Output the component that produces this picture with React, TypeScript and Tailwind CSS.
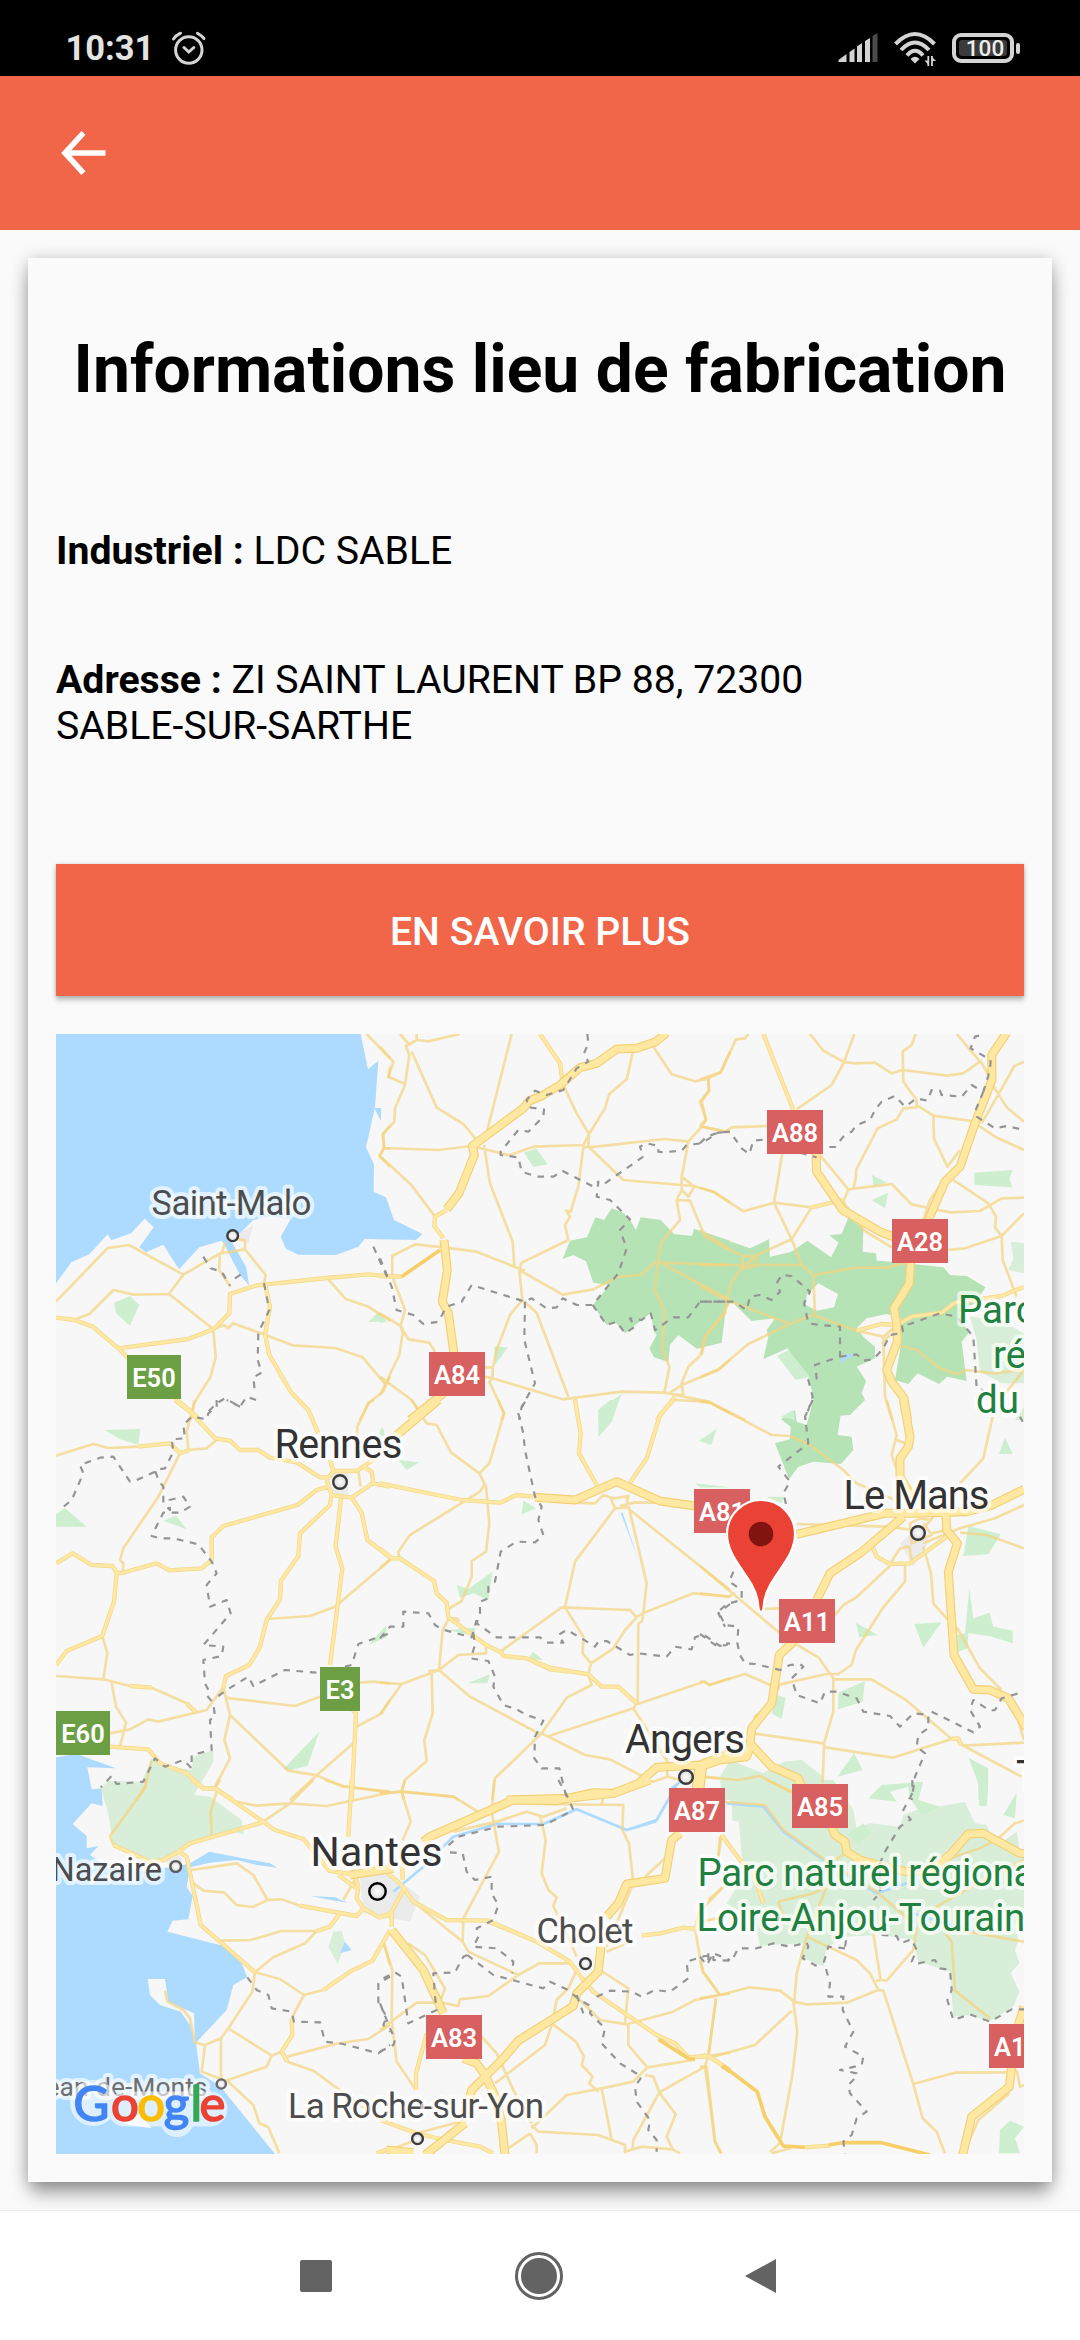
import React from 'react';

type Tile = {
  x: number;
  y: number;
  water?: string;
  river?: string;
  land?: string;
  forest?: string;
  clearing?: string;
  park?: string;
  wood?: string;
  urban?: string;
  pond?: string;
  minor: string;
  medium?: string;
  highway?: string;
  trunk?: string;
  border?: string;
};

// Each tile's polylines are in thirds of a pixel, measured from the tile's corner.
const tiles: Tile[] = [
  {
    x: 40,
    y: 1020,
    water:
      '48,42 962,42 984,148 1015,122 1005,262 978,382 1002,434 1001,515 1038,532 1062,600 1148,642 1128,660 974,657 955,680 888,705 775,704 738,686 722,650 752,598 690,590 640,600 600,640 575,665 618,740 628,797 600,765 550,668 545,662 478,682 417,748 370,674 318,697 298,682 341,622 314,596 273,640 214,661 203,643 148,703 95,726 48,790;1003,264 1024,264 1022,303',
    urban: '600,640 640,615 625,670 600,662',
    wood: '222,848 270,828 298,855 270,917 228,880;1015,875 985,905 1040,905',
    minor:
      '48,845 203,684 267,675 430,764 540,700 615,688 615,662 585,655;430,764 387,822 282,824 220,810 148,882 100,900;387,822 520,928 527,1012 512,1070 462,1150 452,1200;545,700 555,668;540,700 537,750 572,800;615,688 677,765 672,790;520,928 552,915 565,925 578,910 675,944 758,976 886,984 968,1012 1038,1095 1050,1070;1038,1095 1030,1115 985,1150 960,1200;865,778 916,836 985,860 1050,902;980,42 1050,115;1046,175 1050,140;1050,318 1030,342 1032,384 1018,408 1050,440;1032,384 1050,385;520,928 552,900',
    medium:
      '48,893 105,900 158,920 235,985 445,957 520,928 568,880 570,822 650,796 860,774 985,763 1050,770;235,985 262,1012 400,1130 460,1180 480,1200;675,790 690,860 675,944 688,1005 752,1115 805,1170 818,1200',
    border:
      '490,710 512,745 545,755 570,797;585,775 605,762;672,790 688,870 655,938 653,1020 665,1058 640,1072 645,1118;648,1140 620,1130 600,1160 555,1135 530,1150 505,1175;1000,680 1050,790',
  },
  {
    x: 380,
    y: 1020,
    forest:
      '548,717 570,662 621,652 646,592 672,600 695,565 730,578 750,600 768,630 782,592 842,600 882,642 936,648 942,626 1050,662 1050,850 1035,870 1020,968 950,986 895,945 870,975 865,1026 822,1012 808,985 830,945 822,935 812,880 735,940 705,905 680,915 638,855 690,795 640,788 618,724 580,705',
    wood:
      '432,398 468,385 503,433 460,441;343,980 384,982 345,1035;655,1170 725,1122 700,1180 690,1200 655,1200;0,880 18,905 0,908',
    minor:
      '60,42 85,70;110,42 110,60 145,64 240,42;110,60 78,78 88,105 75,195 45,265 43,305 8,342 12,384 175,390 275,378 388,406 460,380 610,375 627,342;0,80 40,126 25,170 75,192;95,95 170,263 250,312 290,360;12,384 0,408 95,496 165,590;395,42 322,330;548,190 590,280 627,342 625,380 610,382 595,500 572,575 558,572 570,590 555,615 565,660 425,728 418,750 427,840;820,80 875,163 945,184 985,175 1022,157 1050,95;985,175 987,212 960,245 978,300 965,320 925,365 855,357 627,382;965,320 1050,338;760,90 740,178 688,222 675,265 627,342;312,375 330,490 398,665 403,740;627,382 730,480 940,498 1000,515 1050,548;925,365 905,470 943,500 925,530 905,510 905,470;905,510 890,540 900,600 845,665 833,728 825,812 853,870 848,990 868,1042 853,1118;890,540 930,542 975,650 1050,692;190,682 290,695 403,740 435,752;418,750 548,824 640,808 715,770 783,765 825,727 1050,735;845,730 1050,840 1030,880 975,950 962,1005 925,1040 905,1090 910,1125 870,1122;427,840 390,885 350,990 338,1045 338,1075 328,1085 372,1180 365,1200;427,840 470,878 565,1130;315,1042 338,1042;315,1070 338,1075 548,1138 725,1115 853,1118 985,1145 1050,1180;585,1135 597,1200;870,1118 905,1095 1015,1050 1050,1020;190,682 105,673 37,708 37,770 75,870 62,918 85,958 148,968 165,996;0,880 62,918 68,940 58,1005 0,1125;0,1070 95,1140 115,1170',
    medium: '0,768 65,770;480,42 540,130 548,190;200,570 165,590 163,618 190,655;885,1130 830,1200',
    trunk: '65,770 180,690',
    highway:
      '860,38 828,65 770,85 710,87 650,130 600,143 540,195 490,225 447,243 430,265 277,378 283,405 237,520 200,568;192,660 202,750 187,845 205,880 222,1000;190,1120 90,1200',
    border:
      '622,42 625,70 612,100 625,125 590,145 550,210 500,225 465,212 440,240 445,262 492,268 490,290 445,335 415,330 362,395 362,405 415,412 425,455 470,470 520,470 548,453 640,500 655,485 650,530 690,540 750,598 720,630 740,685 715,760 638,855 590,855 548,835 530,862 500,865 455,835 435,845 275,795 245,845 200,860 175,905 130,912 100,885 50,870 35,800 0,715;675,490 715,462 790,410 780,380 800,370 835,378 835,395 850,397 905,392 920,375 965,370 1015,338 1050,335;638,855 680,915 710,905 735,940 765,920 750,895 785,900 812,880 825,930 880,892 925,892 960,845 1040,845;435,845 433,960 465,1090 425,1160 418,1200',
  },
  {
    x: 700,
    y: 1020,
    forest:
      '0,632 150,685 207,658 210,710 273,696 322,662 393,712 416,668 388,646 425,642 445,593 490,625 488,695 528,700 530,722 575,725 730,742 750,765 800,768 857,802 825,850 780,880 805,940 785,965 800,1083 742,1070 717,1092 653,1060 625,1092 585,1080 605,960 600,890 560,882 500,895 470,925 490,950 525,980 525,1015 470,1040 498,1082 485,1120 495,1138 445,1185 420,1187 410,1230 340,1230 335,1200 340,1130 325,1070 262,985 190,1018 205,950 200,930 225,895 155,903 100,850 80,850 65,968 0,983',
    clearing: '355,790 414,822 402,862 350,872 318,855 320,825',
    park: '932,665 972,670 972,760 925,750 940,715;810,890 900,900 972,940 972,1090 905,1090 840,1055 830,960;945,1200 972,1160 972,1200',
    wood: '232,1008 265,990 330,1070 287,1080;517,465 560,488 520,498;515,540 564,518 556,565;823,458 938,450 928,475 937,502 823,495;243,1190 280,1170 285,1200',
    pond: '415,1030 470,1003 435,1003',
    minor:
      '145,42 135,55 108,58 62,157 0,178;330,42 370,92 432,126 465,130 525,128 575,160 608,150 742,167 790,160 840,125 770,42;463,42 432,126 395,195 290,268;647,42 635,75 608,95 610,185 650,240 650,262 610,265 590,298 533,325 468,450 468,470 460,508;650,255 700,287 815,303 885,350 972,390;700,287 702,355 742,440 780,390;972,125 943,138 900,215 845,310;875,190 920,262 972,305;840,120 865,165;0,318 75,335 95,322 200,318;25,175 27,212 5,245 18,298 0,318;0,503 40,515 130,574 222,548 335,562 275,658 160,710 130,708 100,695 0,630;247,400 222,548 275,658 305,735;360,405 445,508 575,492 635,553 750,577 840,573 905,535 972,533;445,508 430,545 490,630 575,682;745,690 795,685 905,648 972,580;760,480 865,550 888,590 885,622 905,648 908,720 950,830;670,600 690,540 725,490;0,735 305,735 340,765 470,743 560,743 632,725;130,708 170,708 165,738 122,748 130,708;122,748 165,710;122,748 95,785 80,840 75,880 15,950 5,1005;0,798 80,840 270,912 340,885 470,932;270,912 145,972 55,1048 0,1072;340,765 345,885;550,950 555,1130 577,1200;605,978 650,990 720,1045 770,1062 800,1050 880,1060 972,1050;972,1050 900,1140;545,970 570,945;0,1143 30,1148 135,1200;470,932 550,950 585,920',
    medium: '190,42 280,270;470,932 545,912 590,915 635,890 725,878 765,848 905,828 972,800;335,562 428,540',
    highway:
      '920,38 875,105 876,180 825,310 780,440 735,485 685,600;632,725 628,790 582,865 590,910 592,965 560,1050 575,1085 612,1135 623,1200;348,400 350,455 428,570 540,635 580,650',
    border:
      '0,370 20,350 55,338 90,335 125,385 148,402 160,362 200,358;388,381 405,381 430,350 455,335 470,315 510,300 525,270 545,245 585,228 615,260 650,235 682,242 695,210 720,212 725,225 785,230 815,195 850,215 870,150 872,120 812,85 825,50 855,42;850,215 825,275 830,290 885,325 920,318 972,330;0,845 100,845 140,870 150,830 180,825 215,840 240,815 230,790 245,765 275,768 330,815 312,850 325,910 370,916 420,920 420,1010 345,1035 350,1075 325,1080 338,1130 315,1200;420,1010 470,1003 490,1022 520,1018 550,985 570,945 610,938 605,915 630,912 720,880 770,890 820,950 830,1105 850,1110;300,398 350,412',
  },
  {
    x: 40,
    y: 1400,
    urban: '875,210 925,210 925,285 880,285',
    wood: '195,90 301,87 295,134 240,118;48,343 75,325 140,380 48,380;370,362 408,347 440,388;985,735 1038,677 1040,712;730,1107 838,995 803,1097 745,1112;1015,105 1028,80 1035,108',
    minor:
      '48,167 160,132 205,144 295,140;465,0 455,40 440,95 445,150 500,145 530,120;420,160 355,290 250,445 240,480 250,490 248,519;680,657 810,648 885,620 1050,480;48,828 190,838 270,858 335,863 440,910 468,937;187,708 202,760 190,838;215,848 228,920 258,968 240,1040;210,1000 270,988 325,958 355,965 500,930 550,862;550,862 570,945 553,1020 570,1075 525,1160;555,893 765,918 840,890;570,945 745,1112 830,1126 910,1160 1050,1175;950,980 1025,940 1050,900;960,848 1000,845 1050,850;940,1030 830,1126 750,1200;1000,0 985,10 952,80 950,130;955,213 962,260;335,1080 315,1160 290,1200',
    medium:
      '405,0 455,40 525,115 570,122 600,150 655,150 690,173 770,187 840,232 865,232;860,240 875,285 935,293 1000,248 995,215 970,200 950,213 880,213 860,240;880,213 870,180;775,0 805,30 835,100;1000,250 1050,260;970,200 1010,170;865,260 830,270 773,315 550,378 515,412 515,480 485,505 388,511 350,490 245,519 230,519 218,498 155,495 98,460 48,490;230,519 222,605 187,708 80,753 48,795;873,290 870,315 780,400 775,468 723,542 720,598 680,660 660,740 628,795 558,828 550,865;903,295 887,440 907,505 870,795;935,293 965,338 982,420 1050,472;210,1040 325,1048 360,1090 440,1120 490,1165 525,1165 580,1200;935,925 948,940 935,1200;295,140 390,130 420,160 448,150;270,858 335,863;440,910 468,937',
    border:
      '530,0 530,20 505,40 500,58 455,50 430,75 435,115 395,118 400,155 375,205 345,210 355,240 370,260 370,310 390,330 388,300 430,290 450,320 420,338 370,338 335,408 360,415 400,415 475,433 515,485 530,520 500,555 510,620 560,600 572,640 490,735 550,740 545,768 490,780 495,850 505,870 500,885 520,910 525,950 510,960 515,1050 455,1065 455,1105 430,1080 375,1100 345,1075 310,1145 230,1152 215,1128 182,1162;345,215 290,240 270,245 220,170 180,173 120,195 130,220 95,300 65,325;535,888 560,870 625,830 640,858 735,810 830,818;915,800 935,795 955,732 1050,700;600,20 560,0',
  },
  {
    x: 380,
    y: 1400,
    park: '1020,1140 1050,1120 1050,1170 1025,1170',
    wood: '430,302 468,325 425,343;55,180 118,187 80,210;230,555 265,567 337,515 325,600 280,580 240,593;205,690 285,683 285,708;458,755 490,780 445,778;262,850 330,823 322,850;655,30 690,0 718,0 695,65 655,112;957,122 1010,87 992,135;945,250 1050,262 960,262;0,90 8,82 12,110 0,110',
    pond: '722,338 728,338 774,478',
    river: '875,1165 915,1135',
    minor:
      '95,0 140,70 170,75 213,157 298,220 318,260 328,370 318,455 275,483 275,530 245,603 203,628;355,0 372,40 328,190 298,220;312,255 300,275 90,405 55,455 58,475;0,505 35,475;207,655 188,690 177,810 235,765 318,760 318,738;207,655 230,655 238,665;145,813 177,810 65,852 0,848;65,852 0,942;155,812 158,940 133,1020 140,1083 75,1140 65,1175 0,1180;65,1175 220,1190 235,1200;177,810 270,890 485,1005;485,1000 345,1135 337,1200;65,1175 72,1200;365,752 545,622 750,630 770,652 735,690 700,745 633,790 625,823 635,855 560,893 485,1000 615,1065 690,1078 790,1130;555,622 610,710 608,760 633,790;555,622 585,485 705,325;705,325 738,322 745,288 700,295 670,285 645,310 580,308;705,325 690,290;738,285 800,550 788,655 785,665 775,670 773,912 972,845 988,855 1050,835;770,650 800,635 940,580 1050,590;740,322 1050,570;720,318 765,307 840,308;500,1010 760,925 865,1090;770,910 760,925;860,1075 862,1130 820,1145 790,1140;862,1130 900,1140;880,0 985,5 1050,38;970,1130 1020,1135',
    medium:
      '0,250 245,300 360,308 410,285 460,290;0,445 35,475 60,475 162,543 170,580 200,608 205,652 315,733 365,758 370,768 440,775 510,803 625,823 665,860 715,860 770,910;440,775 510,808 570,815;585,0 602,100 597,160 650,255;880,0 840,45 800,175 750,248',
    highway:
      '175,0 45,110;465,292 585,300 710,245 840,303 945,318;380,1200 560,1195 700,1180 775,1150 830,1102 960,1095 1050,1060;958,1095 948,1165',
    border:
      '435,5 415,40 430,100 435,150 465,290 485,320 475,360 490,405 465,427 410,425 362,455 345,545 325,560 325,595 300,605 300,640 290,670 350,712 480,712 500,728 550,728 535,705 560,690 605,715 645,740 655,725 680,723 750,765 775,760 860,770 885,740 935,748 945,712 970,703 1020,738 1050,730;0,715 30,680 70,680 70,635 145,640 165,675 185,688 275,712 290,660;280,700 285,735 272,775 325,783 345,830 340,860 370,915 410,928 440,945 490,962 465,1010 463,1075 485,1105 538,1105 560,1195;1050,612 1015,640 1035,680',
  },
  {
    x: 700,
    y: 1400,
    forest:
      '340,0 495,0 450,45 422,45 413,105 455,110 460,150 423,192 340,185 295,200 267,238 225,130 270,118 272,80 243,58 285,30 290,65 320,75',
    park: '60,1130 90,1080 190,1120 250,1085 305,1080 370,1130 370,1200 75,1200',
    wood: '5,122 48,87 35,133;915,112 938,162 897,162;805,378 902,403 865,463 790,468;808,565 820,655 868,638 880,680 938,692 938,730 868,708 805,700 803,745 775,755 770,705 795,700;643,672 725,667 670,743;468,668 533,705 478,712;415,878 495,843 488,905 415,928;230,885 257,893 245,957 215,940;462,1060 488,1110 412,1130;805,1073 865,1105 862,1200 835,1200 835,1150;200,290 250,290 245,310;0,252 75,262 0,262',
    urban: '600,430 640,395 690,420 640,500',
    minor:
      '0,5 30,8 215,105 270,108 330,135 430,210 470,250 580,298;560,0 590,105 575,165 595,220;590,120 615,130;878,50 850,175 780,250;972,315 885,355 780,385 670,430;780,398 860,405 972,445;290,372 560,380 640,390;690,360 660,355 630,370 635,430 695,405 670,370;700,350 670,385;570,492 600,445 628,440 635,480;670,440 693,520 700,610 740,655 775,690 840,805 905,870;615,490 615,545 550,622 468,750 455,795 410,825;570,497 468,593 430,615 400,650;0,498 240,700;280,728 355,772 400,835 400,935 372,1030 368,1150;400,838 515,838 615,898 755,1017;410,822 380,822 240,853 215,910 165,950 155,985;0,845 14,845 28,855 135,822 215,857 260,850;0,580 88,590 105,578;195,627 237,625;160,1000 370,1030 375,1042 578,1073 755,1017 775,1015 790,1037 972,1028;780,1032 965,1130;0,1130 115,1140 180,1128 275,1178;940,915 972,1020;695,400 740,390',
    medium: '520,445 530,470 570,492 630,490 740,410;755,1017 775,1015 782,1035',
    highway:
      '610,0 630,110 625,140 600,175 600,230 635,290;290,403 555,340 640,340 800,335 870,318 972,268;610,350 480,460 390,520 350,600;280,725 238,765 215,910 155,985 150,1030 215,1100 295,1135 305,1160;150,1040 140,1070 60,1080 0,1100;0,1165 8,1100;738,345 740,390 772,430 745,515 762,765 820,868 870,870 925,895 980,985',
    border:
      '338,0 315,50 325,130 235,200 270,245 250,280 260,320;100,515 88,545 125,570 125,600 80,612 55,635 75,675 115,680 112,730 120,765 135,790 165,792 240,810 270,795 300,792 310,800 275,835 290,885 360,910 375,875 410,875 470,895 490,935 570,948 600,980 640,940 685,945 685,985 655,1005 650,1040 675,1060 645,1130 635,1200;0,702 50,738 80,735 88,712;695,935 820,997 840,980 810,930 820,900 870,932 885,930 905,895 972,875;960,50 968,65',
  },
  {
    x: 40,
    y: 1780,
    water:
      '48,-68 110,-78 228,-35 142,-38 155,28 185,25 188,78 155,70 98,132 140,168 140,205 175,198 150,225 200,260 300,270 400,262 450,250 508,215 690,250 712,263 650,255 590,240 510,248 450,262 440,320 458,348 445,418 398,422 382,455 560,500 605,550 622,592 580,615 560,690 468,788 480,880 540,918 705,1122 48,1122',
    land: '323,597 375,597 385,665 462,700 465,788 450,735 422,695 360,675 330,645;240,1020 300,1005 335,1045 265,1035',
    park: '182,25 205,3 305,5 335,-65 390,-40 455,-30 460,-70 520,-90 520,-55 462,45 510,50 605,120 612,162 560,155 430,205 370,240 330,245 220,195 205,100;880,455 905,452 916,490 893,553 865,500',
    pond: '812,348 885,352 922,368 860,358;900,520 915,485 935,510',
    urban: '960,290 1050,280 1140,350 1110,425 1050,415 970,400;370,235 410,220 430,240 400,270',
    minor:
      '540,0 525,25;530,35 512,95 515,165;590,65 650,77 750,70 860,78 1050,38;665,128 750,70 820,0;855,0 910,18 1050,38;455,270 590,250 640,285 683,360 638,381 590,375 553,338 490,332 460,310;683,360 725,358 780,377;540,482 632,480 725,453 830,453 795,490 700,532 645,577 637,635 565,745 543,775 543,895;645,577 720,597 792,645 760,705 755,715;850,630 792,645;565,745 695,827 680,860 540,908;725,815 695,827;742,830 895,790 985,777 1050,735;742,845 820,872 960,975 1050,1030;543,775 495,795 485,875 565,905 640,975 658,1030 685,1042 718,1120;375,632 383,665 430,690 450,715 465,788 495,795;1030,485 1050,555;950,290 910,360;320,0 315,25 210,168 220,195',
    medium:
      '455,0 490,25 525,25 705,150 790,177 868,272 945,285;665,128 450,190 415,215 370,240 330,245 220,195;415,215 440,230 482,435 540,485;540,485 645,577;935,0 925,170;780,377 950,408 970,385 1018,412 1050,405;945,290 955,320 950,355 970,385;900,400 870,440 830,453;850,630 930,575 998,542 1050,450;755,715 757,765 725,815 742,845;895,285 950,325;1010,1120 1050,1105',
    highway: '930,285 1060,265',
    border:
      '622,592 650,630 685,645 695,685 755,695 762,725 840,727 855,785 910,792 1015,820 1050,795;1050,590 1015,610 1015,670 1040,710 1030,735 1050,755',
  },
  {
    x: 380,
    y: 1780,
    river: '40,335 130,260 220,170 350,132 490,132 590,88 740,150 830,120 890,15;500,128 590,88;740,150 830,124',
    minor:
      '0,40 65,35 220,50 310,105;75,0 65,35 92,125 68,180;343,0 335,95 357,215 250,415 248,485 265,515 415,585;220,155 350,125 440,95 490,110 560,85;480,105 497,180 485,280 505,330 530,352 520,378 560,460 590,530;490,72 730,75 727,150 747,190 760,310 680,500;855,235 795,290;665,72 670,50;100,365 248,485;10,485 37,570 35,720 50,845 108,930;85,490 135,525 195,625 180,665;0,750 110,668 185,668 235,678 240,658 325,648 415,585 478,550 570,550;590,570 565,625 530,660 515,735 495,795 345,910;515,730 588,785 612,830 605,855 638,890 627,910 655,935;305,770 350,820 400,930 455,1030;600,660 660,720 740,733 875,697 945,660 1020,645 1050,640;660,570 745,625 735,730;680,515 760,480;745,735 745,795 802,862 760,905 665,925 560,945 455,1045;455,1035 475,1055 655,1065 735,1095 735,1120;450,1060 470,1095 470,1120;450,1060 385,1105;665,925 695,1080;802,862 940,840;795,885 820,890 838,937 887,1003 860,1070 878,1108 785,1100 735,1115;838,937 975,860 1005,1085 1022,1120;838,937 760,1080 757,1110;878,1108 900,1120;1008,655 985,828 975,860;985,828 1050,818;945,447 968,575 1020,645;945,447 955,400 1030,320;1020,170 1015,230;1030,170 1050,195;110,1080 0,1120;200,1060 260,1020 110,1060',
    medium:
      '0,260 60,310 100,365 200,420 325,422 470,485;325,425 400,455 470,485 570,545 610,600 640,635 830,765 885,790 925,832 985,828 1050,870;75,320 35,395 35,440;0,412 35,398;65,200 68,300;140,760 108,880 108,930;0,1020 110,1060 195,1080 300,1100 340,1120;785,467 840,460 910,443 950,447',
    trunk: '835,778 925,835 945,838;1025,858 1050,875',
    highway:
      '900,160 875,180 855,295 740,312 715,370 680,410;663,500 655,575 590,640 580,678 415,782 370,835 275,930 255,1000;255,1030 135,1125;35,450 130,570 190,700;250,835 290,850 315,885 350,960 365,1030 375,1125;130,185 150,170 400,60 530,62 640,38 700,40 810,0;955,0 950,25;20,1110 100,1118',
    border:
      '535,0 560,45 580,90 495,135 355,140 235,170 195,205;210,217 248,220 260,275 285,300 335,290 335,340 355,375 340,420 290,445 295,470 280,500 350,505 400,545 397,580;262,525 340,585 490,625 510,605 560,628 600,660 635,680 630,700 675,745 665,790 720,850 785,890 765,920 770,965 810,1020 805,1050 830,1080 830,1115;590,645 610,700;262,525 250,530 225,577 160,580 165,650 170,690 85,730 65,590 45,577 0,600;0,670 20,720 45,780 40,795 0,815;650,650 690,632 755,635 785,650 825,630 870,635 925,595 920,545 1000,520 1050,540;985,520 985,555',
  },
  {
    x: 700,
    y: 1780,
    park: '95,70 60,0 400,0 460,90 470,145 510,130 600,140 610,105 650,90 795,66 825,130 860,135 870,160 955,200 972,235 972,400 945,440 955,480 945,510 958,550 932,580 958,635 940,680 870,723 810,705 760,710 750,575 655,545 640,480 540,465 440,470 380,500 370,560 300,530 310,490 180,497 165,430 80,370 130,290 117,125 97,122;902,190 950,155 958,200',
    wood: '505,55 545,15 670,5 655,60 720,80 665,105 630,55 625,20 570,35 590,65;835,0 865,0 860,78 838,78;910,105 950,38 945,115;440,165 490,130 512,160 475,195;900,1050 930,1022 972,1040 945,1075 960,1120 897,1120',
    river: '80,70 190,80 250,155 370,240 530,340 620,310;640,400 820,455',
    minor:
      '75,66 195,75 250,150 390,250 530,335 640,430;65,165 55,230;70,320 25,360;235,365 340,340 380,320 320,470 290,580 283,665 240,632 150,622 60,645 0,655;235,365 250,410;320,470 470,540 510,580 535,630 550,632 640,912 668,1015 710,1055 735,1120;535,630 440,668 320,673 280,665 292,755 278,880 240,1090 210,1115;275,692 165,795 40,830;520,460 542,600 560,602 640,510 650,440;640,912 765,878 920,877;755,485 765,632 870,715;735,460 755,485;700,385 870,290 972,240;720,440 972,485;750,235 840,205 895,175 945,130 972,122;200,0 275,35;0,860 20,860 45,1085 65,1120;48,655 25,828;0,540 10,575 60,645;250,1098 270,1105 215,1120;928,940 835,1020 800,1100;950,870 960,920 972,915;540,602 528,602;0,425 80,410;380,255 430,225',
    medium: '65,165 120,240 160,280 190,370;0,828 25,828 70,858;315,1102 390,1097',
    trunk: '70,858 172,935 195,1010 250,1098 315,1102;385,1095 430,1088 545,1088 690,1125',
    highway:
      '295,0 297,8;395,140 405,165 435,185 440,215 480,240 560,262 620,275 690,270 750,225 805,162 850,160 960,220 980,222;972,680 955,735;935,860 928,920 815,1010 788,1125',
    border:
      '637,0 637,40 610,90 632,118 600,140 555,215 540,250 540,340 520,360;435,500 440,470;0,530 20,555 40,520 40,540 95,542 115,505 170,505 220,490 270,500 320,488 325,500 308,535 350,558;435,505 385,500 372,545 390,610 385,650 430,650 428,690 460,755 435,800 490,830 485,855 420,870 470,880 470,890 445,915 450,940 500,995 470,1015 455,1065 430,1085 435,1120;545,465 590,468 600,490 635,478 650,510 635,545 655,550 705,540 720,565 750,570 755,630 742,660 760,720 810,703 870,725 935,688 972,688',
  },
];

const toPath = (lines: string | undefined, close: boolean) =>
  lines ? lines.split(';').map((l) => 'M' + l + (close ? 'Z' : '')).join('') : '';

type LayerKey = Exclude<keyof Tile, 'x' | 'y'>;

function Layer({ of, ...svg }: { of: LayerKey } & React.SVGProps<SVGPathElement>) {
  const close = !!svg.fill && svg.fill !== 'none';
  return (
    <>
      {tiles.map((t) =>
        t[of] ? (
          <path
            key={t.x + '-' + t.y}
            d={toPath(t[of], close)}
            transform={'translate(' + t.x + ' ' + t.y + ') scale(0.33333)'}
            strokeLinejoin="round"
            {...svg}
          />
        ) : null,
      )}
    </>
  );
}

const shields: [string, number, number, number, string][] = [
  ['A88', 767, 1110, 56, '#d96060'],
  ['A28', 892, 1219, 56, '#d96060'],
  ['A84', 429, 1352, 56, '#d96060'],
  ['E50', 127, 1355, 54, '#6c9f43'],
  ['A81', 694, 1489, 56, '#d96060'],
  ['A11', 779, 1599, 56, '#d96060'],
  ['E3', 320, 1667, 40, '#6c9f43'],
  ['E60', 56, 1711, 54, '#6c9f43'],
  ['A87', 669, 1788, 56, '#d96060'],
  ['A85', 792, 1784, 56, '#d96060'],
  ['A83', 426, 2015, 56, '#d96060'],
  ['A10', 989, 2024, 56, '#d96060'],
];

const labels: { t: string; x: number; y: number; s: number; c: string; w?: number; end?: boolean }[] = [
  { t: 'Saint-Malo', x: 151.5, y: 1215, s: 35, c: '#4d4d4d', w: 160 },
  { t: 'Rennes', x: 274.5, y: 1458, s: 40, c: '#333333', w: 128 },
  { t: 'Le Mans', x: 843.5, y: 1509, s: 40, c: '#333333', w: 146 },
  { t: 'Angers', x: 625, y: 1753, s: 40, c: '#333333', w: 120 },
  { t: 'Nantes', x: 310.5, y: 1866, s: 41, c: '#333333', w: 132 },
  { t: 'Cholet', x: 536.5, y: 1942.5, s: 35, c: '#4d4d4d', w: 97 },
  { t: 'La Roche-sur-Yon', x: 288, y: 2118, s: 35, c: '#4d4d4d', w: 256 },
  { t: 'Nazaire', x: 162, y: 1880.5, s: 32.5, c: '#4d4d4d', end: true },
  { t: 'ean-de-Monts', x: 207.5, y: 2095.5, s: 26.5, c: '#707070', end: true },
  { t: 'Parc', x: 958, y: 1323, s: 38.5, c: '#20803f' },
  { t: 'ré', x: 993, y: 1368, s: 38.5, c: '#20803f' },
  { t: 'du', x: 976, y: 1413, s: 38.5, c: '#20803f' },
  { t: 'Tours', x: 1016, y: 1788.5, s: 40, c: '#333333' },
  { t: 'Parc naturel régional', x: 697.5, y: 1886, s: 38.5, c: '#20803f', w: 346 },
  { t: 'Loire-Anjou-Touraine', x: 696.5, y: 1931, s: 38.5, c: '#20803f', w: 349 },
];

const towns: [number, number, number, string][] = [
  [232.7, 1235.7, 5.4, '#3c3c3c'],
  [340, 1482, 6.8, '#3c3c3c'],
  [918, 1533, 6.8, '#3c3c3c'],
  [686, 1777, 6.8, '#3c3c3c'],
  [377.5, 1891.5, 8.2, '#000000'],
  [585.5, 1963.7, 5.4, '#3c3c3c'],
  [417.5, 2138.7, 5.4, '#3c3c3c'],
  [175.7, 1866.5, 5.4, '#5a5a5a'],
  [221.3, 2084, 4.6, '#6a6a6a'],
];

const google: [string, number, string][] = [
  ['G', 73.5, '#4285f4'],
  ['o', 111, '#ea4335'],
  ['o', 137.3, '#fbbc05'],
  ['g', 163.8, '#4285f4'],
  ['l', 190.5, '#34a853'],
  ['e', 199.5, '#ea4335'],
];

function GoogleMap() {
  return (
    <svg className="block h-[1120px] w-[968px]" viewBox="56 1034 968 1120">
      <defs>
        <radialGradient id="town">
          <stop offset="0" stopColor="#ffffff" />
          <stop offset="1" stopColor="#d9d9d9" />
        </radialGradient>
      </defs>
      <rect x="56" y="1034" width="968" height="1120" fill="#f7f7f7" />
      <Layer of="urban" fill="#ebebeb" />
      <Layer of="water" fill="#addbff" />
      <Layer of="land" fill="#f7f7f7" />
      <Layer of="park" fill="#d8eed8" />
      <Layer of="forest" fill="#b6e3b6" />
      <Layer of="clearing" fill="#f7f7f7" />
      <Layer of="wood" fill="#cdeecf" />
      <Layer of="pond" fill="#addbff" />
      <Layer of="river" fill="none" stroke="#addbff" strokeWidth="8" />
      <Layer of="minor" fill="none" stroke="#f4d47f" strokeWidth="8" strokeOpacity="0.72" />
      <Layer of="medium" fill="none" stroke="#f4d889" strokeWidth="13" />
      <Layer of="medium" fill="none" stroke="#ffe8a3" strokeWidth="8.5" />
      <Layer of="trunk" fill="none" stroke="#f6cf69" strokeWidth="11" />
      <Layer of="highway" fill="none" stroke="#f3d076" strokeWidth="27" />
      <Layer of="highway" fill="none" stroke="#ffe8a1" strokeWidth="20" />
      <Layer of="border" fill="none" stroke="#949494" strokeWidth="6.5" strokeDasharray="20 20" />

      {towns.map(([x, y, r, c]) => (
        <circle key={x} cx={x} cy={y} r={r} fill="url(#town)" stroke={c} strokeWidth={2.4} />
      ))}
      <g fontFamily="Roboto, sans-serif">
        {labels.map((l) => (
          <text
            key={l.t}
            x={l.x}
            y={l.y}
            fontSize={l.s}
            fill={l.c}
            textAnchor={l.end ? 'end' : 'start'}
            textLength={l.w}
            stroke="#ffffff"
            strokeOpacity="0.68"
            strokeWidth="8"
            strokeLinejoin="round"
            paintOrder="stroke"
          >
            {l.t}
          </text>
        ))}
        {shields.map(([t, x, y, w, c]) => (
          <g key={t}>
            <rect x={x} y={y} width={w} height="44" fill={c} />
            <text x={x + w / 2} y={y + 31.5} fontSize="25.5" fontWeight="600" fill="#ffffff" textAnchor="middle">
              {t}
            </text>
          </g>
        ))}
      </g>

      <path
        d="M761 1612C758 1612 758.6 1606 757.5 1600C753 1576 727 1560 727 1534A34 34 0 0 1 795 1534C795 1560 769 1576 764.5 1600C763.4 1606 764 1612 761 1612Z"
        fill="#ea4335"
        stroke="#ffffff"
        strokeWidth="2.2"
      />
      <circle cx="761" cy="1534" r="12.3" fill="#811411" />

      <g opacity="0.6" fill="none" stroke="#ffffff" strokeLinecap="round">
        <path d="M93 2103H94" strokeWidth="46" />
        <path d="M125 2109H210" strokeWidth="35" />
        <path d="M177 2112V2120" strokeWidth="34" />
        <path d="M195 2092V2112" strokeWidth="14" />
      </g>
      <g fontFamily="Lato, sans-serif" fontSize="49" strokeLinejoin="round">
        {google.map(([ch, x, c], i) => (
          <text key={i} x={x} y="2121" fill={c} stroke={c} strokeWidth="1.6">
            {ch}
          </text>
        ))}
      </g>
    </svg>
  );
}

function StatusBar() {
  return (
    <div className="flex h-[76px] items-start bg-black text-[#e3e3e3]">
      <div className="pt-[27px] pl-[65.5px] text-[34.5px] leading-[42px] font-bold">10:31</div>
      <svg className="mt-[30px] ml-[17px] h-9 w-9" viewBox="0 0 36 36" fill="none" stroke="#d4d4d4" strokeWidth="3" strokeLinecap="round">
        <circle cx="17.8" cy="20" r="13.2" />
        <path d="M13 17.5L17.8 22L22.8 17.5" />
        <path d="M2.5 9Q5 5.5 9.5 3.2M26.500 3.200Q30.500 5.500 33 8.500" />
      </svg>
      <div className="flex-1" />
      <svg className="mt-[33px] mr-4 h-[30px] w-[40px]" viewBox="0 0 39 30" fill="#d4d4d4">
        <path d="M0 29V27L8 21V29Z" />
        <path d="M11 29V19L16 15.500V29Z" />
        <path d="M18.500 29V13.500L23.500 10V29Z" />
        <path d="M26.500 29V8L31.500 5V29Z" />
        <path d="M34 29V3L39 0V29Z" fill="#4a4a4a" />
      </svg>
      <svg className="mt-[32px] mr-[15px] h-[34px] w-[43px]" viewBox="0 0 43 34" fill="none" stroke="#d4d4d4" strokeWidth="4">
        <path d="M1.500 12Q21 -8 40.500 12" />
        <path d="M7 18Q21 3 35 18" />
        <path d="M13 23.500Q21 14 29 23.500" />
        <path d="M16.500 27Q21 22.500 25.500 27L21 31.500Z" fill="#d4d4d4" stroke="none" />
        <path d="M34.300 24V34M38 34V24" strokeWidth="1.800" />
        <path d="M30.500 28.500H34.500V33ZM37.500 24.500L42 29H37.500Z" fill="#d4d4d4" stroke="none" />
      </svg>
      <div className="mt-[33px] flex h-[30px] w-[62px] items-center justify-center rounded-[9px] border-4 border-[#d4d4d4]">
        <div className="flex h-4 w-[48px] items-center justify-center rounded-[3px] bg-[#3a3a3a] pl-1 text-[22.5px] leading-4 font-medium text-[#ececec]">
          100
        </div>
      </div>
      <div className="mt-[43px] mr-[60px] ml-0.5 h-[11px] w-1 rounded-xs bg-[#d4d4d4]" />
    </div>
  );
}

export default function App() {
  return (
    <div className="flex h-[2340px] w-[1080px] flex-col overflow-hidden bg-[#fafafa] font-[Roboto,sans-serif] text-black">
      <StatusBar />
      <header className="flex h-[154px] items-center bg-[#f16549] pl-[61px]">
        <svg className="h-[46px] w-[45px]" viewBox="0 0 45 46" fill="none" stroke="#ffffff" strokeWidth="5.6">
          <path d="M44.500 23H5M22.500 2.800L4 23L22.500 43.200" />
        </svg>
      </header>

      <main className="flex h-[1980px] flex-col px-7 pt-7">
        <section className="flex h-[1924px] flex-col bg-[#fafafa] px-7 pt-[72px] shadow-[0_14px_18px_-3px_rgba(0,0,0,0.32),0_2px_16px_rgba(0,0,0,0.24)]">
          <h1 className="text-center text-[66px] leading-[80px] font-bold whitespace-nowrap">Informations lieu de fabrication</h1>
          <p className="mt-[118px] text-[39.2px] leading-[46px]">
            <b>Industriel :</b> LDC SABLE
          </p>
          <p className="mt-[83px] text-[39.2px] leading-[46px]">
            <b>Adresse :</b> ZI SAINT LAURENT BP 88, 72300
            <br />
            SABLE-SUR-SARTHE
          </p>
          <button className="mt-[115px] h-[132px] shrink-0 bg-[#f16549] pt-1 text-[39.2px] font-medium text-white shadow-[0_4px_5px_rgba(0,0,0,0.25),0_0_3px_rgba(0,0,0,0.15)]">
            EN SAVOIR PLUS
          </button>
          <div className="mt-[38px]">
            <GoogleMap />
          </div>
        </section>
      </main>

      <nav className="z-10 flex h-[130px] items-center border-t border-[#ececec] bg-white pl-[300px]">
        <svg className="h-8 w-8" viewBox="0 0 32 32">
          <rect width="32" height="32" rx="2" fill="#636363" />
        </svg>
        <svg className="ml-[182px] h-[50px] w-[50px]" viewBox="0 0 50 50">
          <circle cx="25" cy="25" r="22.500" fill="none" stroke="#636363" strokeWidth="3" />
          <circle cx="25" cy="25" r="18" fill="#636363" />
        </svg>
        <svg className="ml-[180px] h-[36px] w-[34px]" viewBox="0 0 34 36">
          <path d="M1 18L32 1V35Z" fill="#636363" />
        </svg>
      </nav>
    </div>
  );
}
